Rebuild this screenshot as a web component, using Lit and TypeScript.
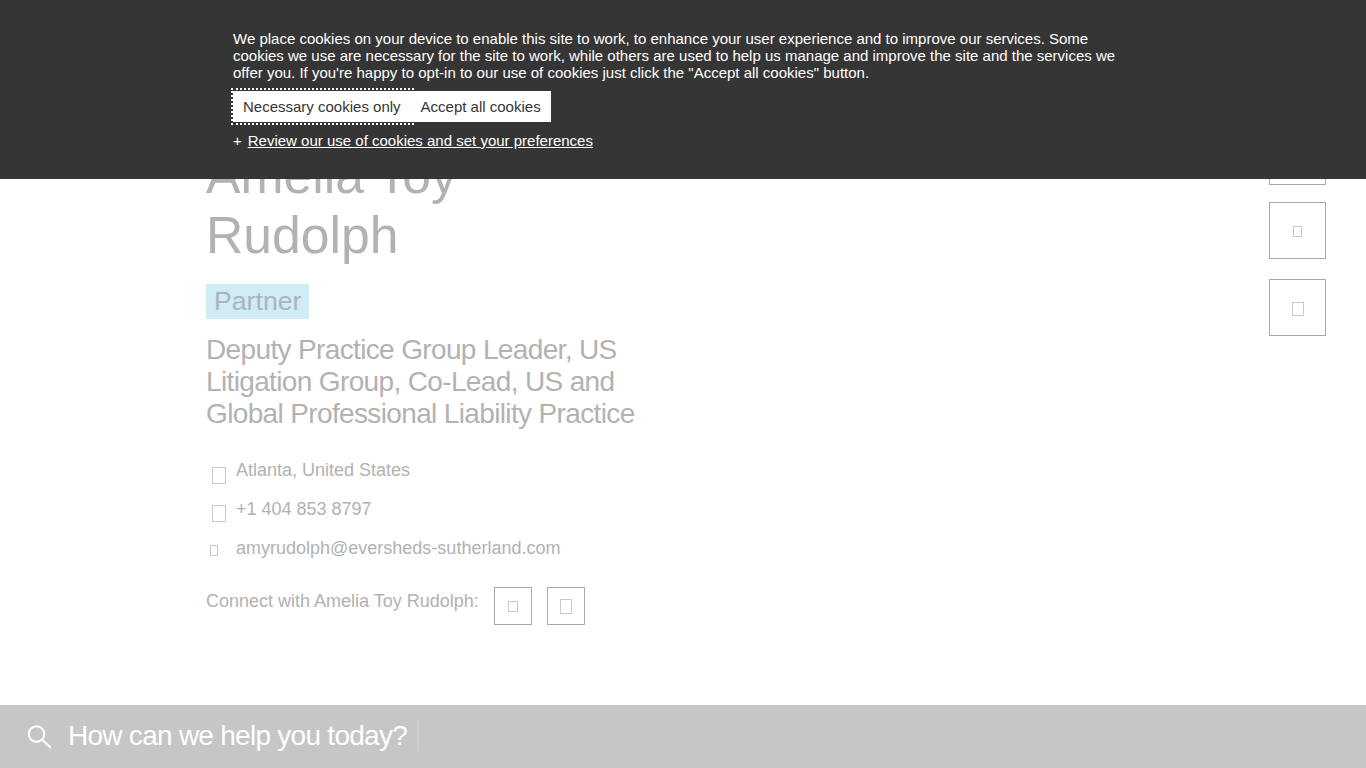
import {LitElement, html, css} from 'lit';
import {customElement} from 'lit/decorators.js';

@customElement('app-root')
export class AppRoot extends LitElement {
  static override styles = css`
    :host {
      display: block;
      position: relative;
      height: 768px;
      overflow: hidden;
      background: #fff;
      font-family: 'Liberation Sans', Arial, sans-serif;
    }
    .page {
      display: flex;
      flex-direction: column;
      height: 768px;
    }

    /* cookie banner lies over the page */
    .cookies {
      position: absolute;
      top: 0;
      left: 0;
      right: 0;
      height: 179px;
      box-sizing: border-box;
      padding: 30px 233px 0;
      background: #353535;
      color: #fff;
      font-size: 15px;
      line-height: 17px;
    }
    .cookies p {
      margin: 0;
      width: 900px;
    }
    .buttons {
      display: flex;
      width: max-content;
      margin-top: 10px;
      background: #fff;
    }
    .buttons button {
      height: 31px;
      padding: 0 10px;
      border: 0;
      background: #fff;
      color: #353535;
      font: inherit;
      font-size: 15px;
    }
    .buttons button.focused {
      position: relative;
    }
    .buttons button.focused::after {
      content: '';
      position: absolute;
      inset: -3px -3px -3px -2px;
      border: 2px dotted #fff;
    }
    .review {
      display: flex;
      gap: 6px;
      margin-top: 10px;
    }
    .review a {
      color: #fff;
      text-decoration: underline;
    }

    .main {
      flex: 1;
      display: flex;
      justify-content: space-between;
      padding: 128px 40px 0 206px;
      color: #b2b2b2;
    }
    .profile {
      padding-top: 17px;
    }
    h1 {
      margin: 0;
      font-size: 51.7px;
      line-height: 60px;
      font-weight: 400;
      word-spacing: -1px;
      width: 300px;
    }
    .badge {
      display: inline-block;
      margin-top: 19px;
      padding: 0 8px;
      height: 35px;
      line-height: 35px;
      background: #cfecf7;
      color: #a9b6bb;
      font-size: 26.67px;
    }
    h2 {
      margin: 15px 0 0;
      font-size: 28px;
      line-height: 32px;
      font-weight: 400;
      letter-spacing: -0.64px;
      width: 450px;
    }
    .contacts {
      margin-top: 21px;
      font-size: 18px;
      line-height: 39px;
    }
    .contact {
      display: flex;
      align-items: center;
      height: 39px;
    }
    .slot {
      display: flex;
      justify-content: center;
      width: 30px;
      box-sizing: border-box;
      padding-right: 4px;
    }
    .tofu {
      display: block;
      box-sizing: border-box;
      border: 1px solid #c9c9c9;
    }
    .tofu.large { width: 14px; height: 17px; margin-top: 9px; }
    .tofu.small { width: 8px; height: 11px; margin-top: 4px; margin-right: 10px; }
    .contact:nth-child(2) .tofu { margin-top: 8px; }
    .connect {
      display: flex;
      margin-top: 19px;
      font-size: 18px;
      line-height: 26px;
    }
    .connect .label {
      margin-right: 15px;
      padding-top: 1px;
    }
    .square {
      display: flex;
      align-items: center;
      justify-content: center;
      box-sizing: border-box;
      border: 1px solid #a9a9a9;
    }
    .connect .square {
      width: 38px;
      height: 38px;
      margin-right: 15px;
    }
    .connect .tofu.small { width: 10px; height: 11px; margin: 1px 0 0; }
    .connect .tofu.large { width: 12px; height: 15px; margin: 0; }
    .side {
      display: flex;
      flex-direction: column;
      gap: 20px;
    }
    .side .square {
      width: 57px;
      height: 57px;
    }
    .side .square:first-child {
      margin-bottom: -3px;
    }
    .side .tofu.small { width: 9px; height: 11px; margin: 2px 0 0; }
    .side .tofu.large { width: 12px; height: 14px; margin: 3px 0 0; }

    .search {
      flex: none;
      display: flex;
      align-items: center;
      height: 63px;
      box-sizing: border-box;
      padding: 0 0 2px 27px;
      background: #c6c6c6;
      color: #fff;
      font-size: 28px;
      letter-spacing: -0.73px;
    }
    .search svg {
      margin: 3px 17px 0 0;
    }
    .caret {
      width: 2px;
      height: 31px;
      margin-left: 10px;
      background: #cecece;
    }
  `;

  override render() {
    return html`
      <div class="page">
        <div class="main">
          <div class="profile">
            <h1>Amelia Toy Rudolph</h1>
            <div class="badge">Partner</div>
            <h2>Deputy Practice Group Leader, US Litigation Group, Co-Lead, US and Global Professional Liability Practice</h2>
            <div class="contacts">
              <div class="contact"><span class="slot"><i class="tofu large"></i></span>Atlanta, United States</div>
              <div class="contact"><span class="slot"><i class="tofu large"></i></span>+1 404 853 8797</div>
              <div class="contact"><span class="slot"><i class="tofu small"></i></span>amyrudolph@eversheds-sutherland.com</div>
            </div>
            <div class="connect">
              <span class="label">Connect with Amelia Toy Rudolph:</span>
              <span class="square"><i class="tofu small"></i></span>
              <span class="square"><i class="tofu large"></i></span>
            </div>
          </div>
          <div class="side">
            <div class="square"></div>
            <div class="square"><i class="tofu small"></i></div>
            <div class="square"><i class="tofu large"></i></div>
          </div>
        </div>
        <div class="search">
          <svg width="24" height="24" viewBox="0 0 24 24" fill="none" stroke="#fff" stroke-width="2">
            <circle cx="9.5" cy="9" r="7.8"></circle>
            <path d="M15 14.5l9 8.5"></path>
          </svg>
          How can we help you today?
          <span class="caret"></span>
        </div>
      </div>
      <div class="cookies">
        <p>We place cookies on your device to enable this site to work, to enhance your user experience and to improve our services. Some cookies we use are necessary for the site to work, while others are used to help us manage and improve the site and the services we offer you. If you're happy to opt-in to our use of cookies just click the "Accept all cookies" button.</p>
        <div class="buttons">
          <button class="focused">Necessary cookies only</button>
          <button>Accept all cookies</button>
        </div>
        <div class="review"><span>+</span><a href="#">Review our use of cookies and set your preferences</a></div>
      </div>
    `;
  }
}

declare global {
  interface HTMLElementTagNameMap {
    'app-root': AppRoot;
  }
}
